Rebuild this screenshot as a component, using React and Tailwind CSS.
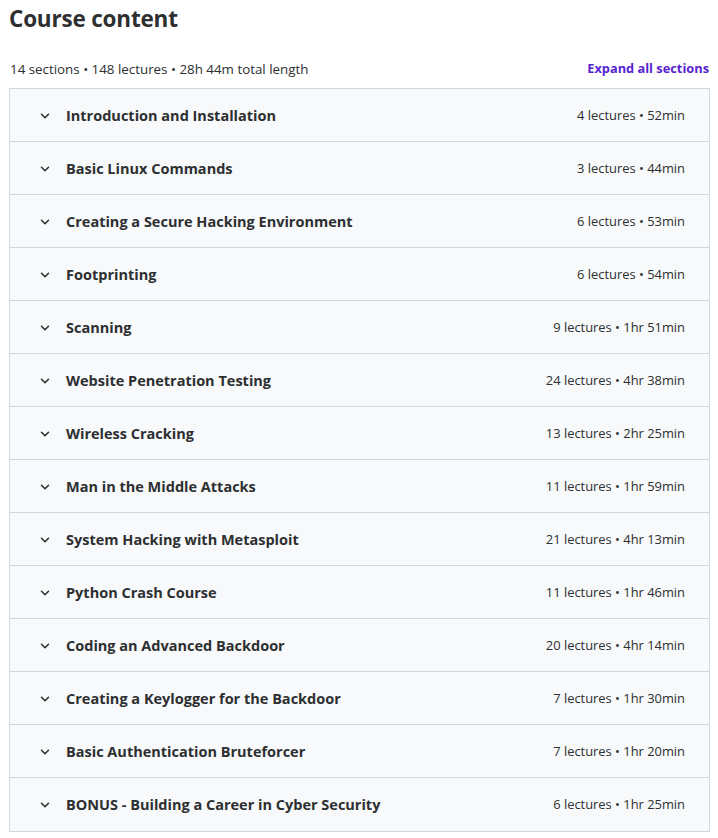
import { ChevronDown } from "lucide-react";

const sections = [
  { title: "Introduction and Installation", meta: "4 lectures • 52min" },
  { title: "Basic Linux Commands", meta: "3 lectures • 44min" },
  { title: "Creating a Secure Hacking Environment", meta: "6 lectures • 53min" },
  { title: "Footprinting", meta: "6 lectures • 54min" },
  { title: "Scanning", meta: "9 lectures • 1hr 51min" },
  { title: "Website Penetration Testing", meta: "24 lectures • 4hr 38min" },
  { title: "Wireless Cracking", meta: "13 lectures • 2hr 25min" },
  { title: "Man in the Middle Attacks", meta: "11 lectures • 1hr 59min" },
  { title: "System Hacking with Metasploit", meta: "21 lectures • 4hr 13min" },
  { title: "Python Crash Course", meta: "11 lectures • 1hr 46min" },
  { title: "Coding an Advanced Backdoor", meta: "20 lectures • 4hr 14min" },
  { title: "Creating a Keylogger for the Backdoor", meta: "7 lectures • 1hr 30min" },
  { title: "Basic Authentication Bruteforcer", meta: "7 lectures • 1hr 20min" },
  { title: "BONUS - Building a Career in Cyber Security", meta: "6 lectures • 1hr 25min" },
];

const SectionRow = ({ section, last }) => (
  <div className={`flex items-center justify-between h-[53px] bg-[#f7f9fa] pl-[28px] pr-[24px] pt-[2px] ${last ? "" : "border-b border-[#d1d7dc]"}`}>
    <div className="flex items-center">
      <ChevronDown size={14} strokeWidth={2.6} className="text-[#2d2f31] mr-[14px]" />
      <span className="text-[14.5px] font-bold text-[#2d2f31]">{section.title}</span>
    </div>
    <span className="text-[12.9px] text-[#2d2f31]">{section.meta}</span>
  </div>
);

export default function App() {
  return (
    <div className="bg-white min-h-screen px-[9px] text-[#2d2f31]" style={{ fontFamily: '"Open Sans", sans-serif' }}>
      <h2 className="text-[22.5px] font-bold leading-none pt-[8px] tracking-[-0.2px]">Course content</h2>
      <div className="flex items-center justify-between mt-[28px] mb-[9px] pl-px">
        <span className="text-[13.35px]">14 sections • 148 lectures • 28h 44m total length</span>
        <button className="text-[12.8px] font-bold text-[#5624d0]">Expand all sections</button>
      </div>
      <div className="border border-[#d1d7dc] w-[701px]">
        {sections.map((section, index) => (
          <SectionRow key={index} section={section} last={index === sections.length - 1} />
        ))}
      </div>
    </div>
  );
}
